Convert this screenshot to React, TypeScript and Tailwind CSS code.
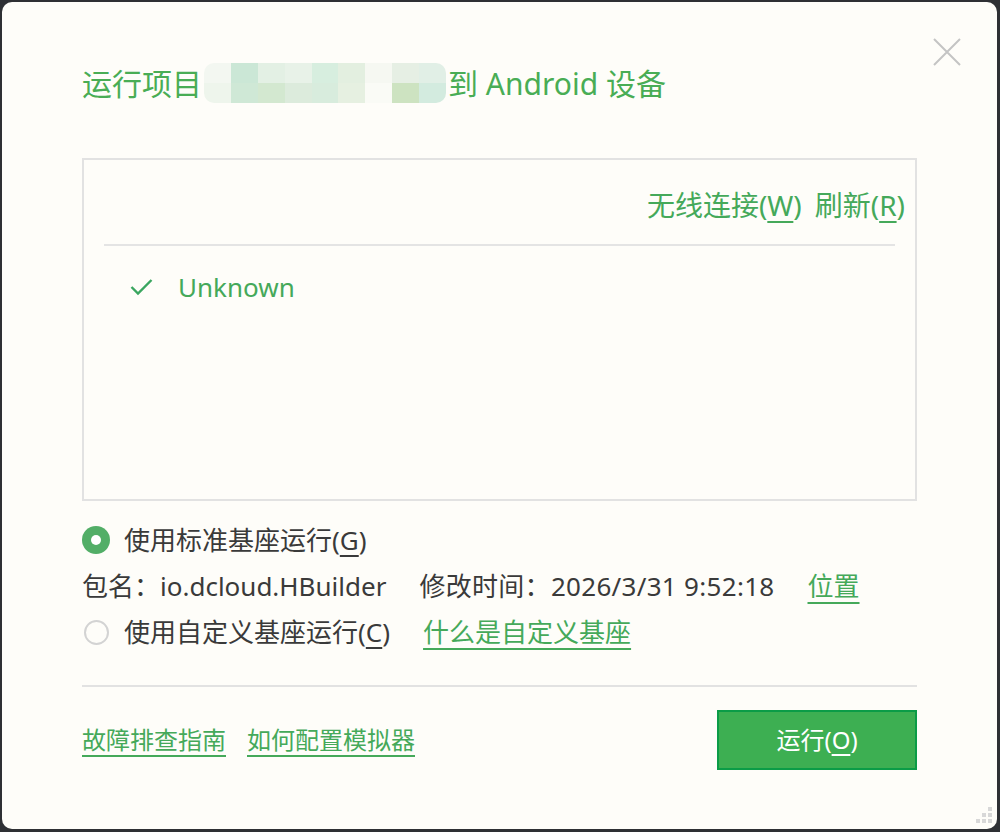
import React from "react";

const FONT = '"Noto Sans", "Noto Sans CJK SC", sans-serif';

const blurTop = ["#f3f7f1", "#cbe7d6", "#e3f0e4", "#e8f2e8", "#d7eedf", "#e3efe0", "#f6f8f2", "#e6efe4", "#e1efe6"];
const blurBot = ["#eef5ec", "#cfe8d6", "#d3e8d0", "#dcebdc", "#d8ecdd", "#e6f0e1", "#fafbf6", "#cde3c1", "#d3ebdf"];

function Blur() {
  return (
    <div className="mx-[2px] h-[40px] w-[242px] overflow-hidden rounded-[10px] grid grid-cols-9 grid-rows-2">
      {blurTop.map((c, i) => (
        <div key={"t" + i} style={{ background: c }} />
      ))}
      {blurBot.map((c, i) => (
        <div key={"b" + i} style={{ background: c }} />
      ))}
    </div>
  );
}

export default function App() {
  return (
    <div className="w-[1000px] h-[832px] bg-[#2e3034] pl-[2px] pt-[2px] pr-[3px] pb-[3px]" style={{ fontFamily: FONT }}>
      <div className="relative h-full rounded-[10px] bg-[#fefdf9] px-[80px] pt-[61px]">
        {/* close */}
        <svg className="absolute left-[931px] top-[36px]" width="28" height="28" viewBox="0 0 28 28">
          <path d="M1 1 L27 27 M27 1 L1 27" stroke="#c4c4c4" strokeWidth="2" />
        </svg>

        {/* title */}
        <div className="flex h-[40px] items-center text-[30px] text-[#49ad55]">
          <span>运行项目</span>
          <Blur />
          <span>到 Android 设备</span>
        </div>

        {/* device box */}
        <div className="mt-[55px] h-[343px] border-2 border-[#e2e2e2] px-[20px] pt-[26px]">
          <div className="-mr-[10px] flex h-[38px] items-center justify-end gap-[13px] text-[28px] text-[#45a95a]">
            <span>
              无线连接(<span className="underline underline-offset-[5px]">W</span>)
            </span>
            <span>
              刷新(<span className="underline underline-offset-[5px]">R</span>)
            </span>
          </div>
          <div className="mt-[20px] h-[2px] bg-[#e4e4e4]" />
          <div className="mt-[23px] flex h-[36px] items-center text-[26px] text-[#45a95a]">
            <svg className="ml-[26px]" width="23" height="18" viewBox="0 0 23 18">
              <path d="M1.5 9 L8 15.5 L21.5 2" fill="none" stroke="#3aa660" strokeWidth="2.4" />
            </svg>
            <span className="ml-[25px]">Unknown</span>
          </div>
        </div>

        {/* options */}
        <div className="mt-[16px] text-[26px] text-[#3a3a3a]">
          <div className="flex h-[46px] items-center">
            <div className="flex h-[28px] w-[28px] items-center justify-center rounded-full bg-[#52ae67]">
              <div className="h-[10px] w-[10px] rounded-full bg-white" />
            </div>
            <span className="ml-[14px]">
              使用标准基座运行(<span className="underline underline-offset-[5px]">G</span>)
            </span>
          </div>
          <div className="flex h-[46px] items-center">
            <span>包名：io.dcloud.HBuilder</span>
            <span className="ml-[33px] tracking-[0.3px]">修改时间：2026/3/31 9:52:18</span>
            <span className="ml-[33px] text-[#45a95a] underline underline-offset-[6px] decoration-2">位置</span>
          </div>
          <div className="flex h-[46px] items-center">
            <div className="ml-[2px] h-[25px] w-[25px] rounded-full border-2 border-[#d3d3d3]" />
            <span className="ml-[15px]">
              使用自定义基座运行(<span className="underline underline-offset-[5px]">C</span>)
            </span>
            <span className="ml-[33px] text-[#45a95a] underline underline-offset-[6px] decoration-2">什么是自定义基座</span>
          </div>
        </div>

        <div className="mt-[30px] h-[2px] bg-[#e2e2e2]" />

        <div className="mt-[23px] flex items-center justify-between">
          <div className="flex items-center gap-[21px] text-[24px] text-[#45a95a]">
            <span className="underline underline-offset-[6px] decoration-2">故障排查指南</span>
            <span className="underline underline-offset-[6px] decoration-2">如何配置模拟器</span>
          </div>
          <button className="flex h-[60px] w-[200px] items-center justify-center border-2 border-[#0b9c47] bg-[#3daf52] text-[24px] text-white">
            <span>
              运行(<span className="underline underline-offset-[5px]">O</span>)
            </span>
          </button>
        </div>

        {/* resize grip */}
        <div className="absolute right-[5px] bottom-[6px] grid grid-cols-3 gap-[2px]">
          <div className="h-[4px] w-[4px]" />
          <div className="h-[4px] w-[4px]" />
          <div className="h-[4px] w-[4px] bg-[#d8d8d8]" />
          <div className="h-[4px] w-[4px]" />
          <div className="h-[4px] w-[4px] bg-[#d8d8d8]" />
          <div className="h-[4px] w-[4px] bg-[#d8d8d8]" />
          <div className="h-[4px] w-[4px] bg-[#d8d8d8]" />
          <div className="h-[4px] w-[4px] bg-[#d8d8d8]" />
          <div className="h-[4px] w-[4px] bg-[#d8d8d8]" />
        </div>
      </div>
    </div>
  );
}
